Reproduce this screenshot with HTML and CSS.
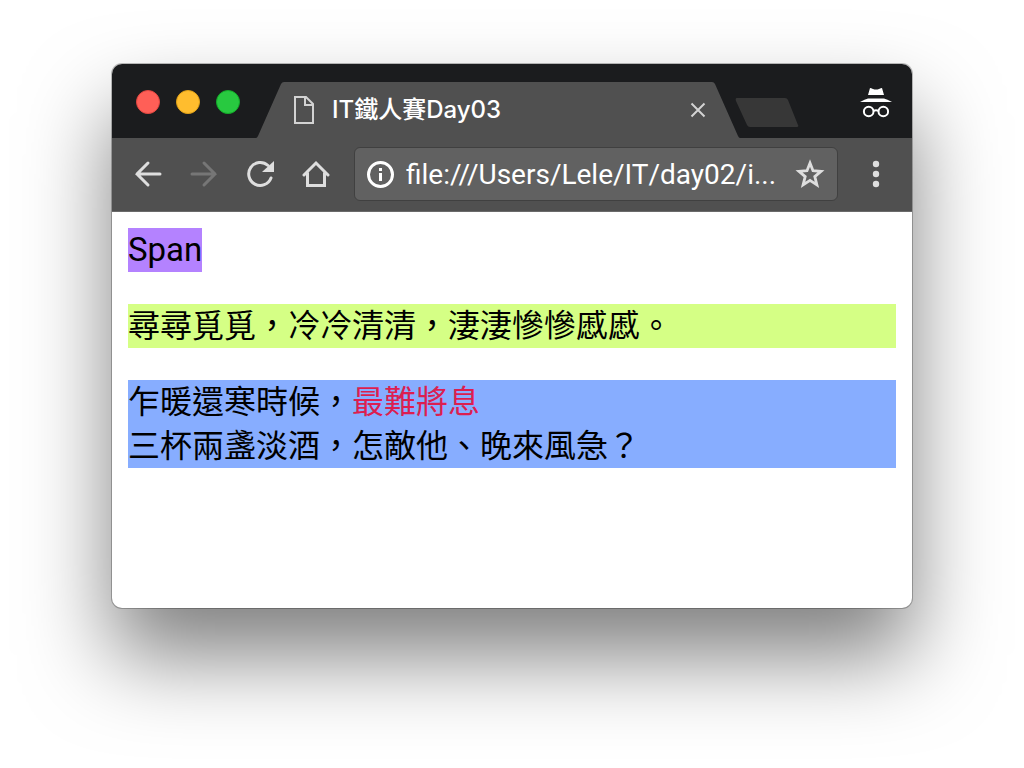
FILE: index.html
```html
<!DOCTYPE html>
<html lang="zh-Hant">
<head>
    <meta charset="UTF-8">
    <meta name="viewport" content="width=device-width, initial-scale=1.0">
    <title>IT鐵人賽Day03</title>
    <link rel="stylesheet" href="styles.css">
</head>
<body>
    <div class="window">
        <header class="tab-strip">
            <div class="lights">
                <button class="light close" aria-label="Close window"></button>
                <button class="light minimize" aria-label="Minimize window"></button>
                <button class="light maximize" aria-label="Zoom window"></button>
            </div>
            <div class="tab">
                <svg class="slope" width="28" height="56" viewBox="0 0 28 56"><path d="M0 56 Q1 56 2 54 L25 2 Q26 0 28 0 V56 Z"/></svg>
                <div class="tab-body">
                    <svg width="20" height="28" viewBox="0 0 20 28" fill="none" stroke="#d3d3d3" stroke-width="2"><path d="M1 1 H12 L19 8 V27 H1 Z M11 1 V9 H19"/></svg>
                    <span class="tab-title">IT鐵人賽Day03</span>
                    <button class="tab-close" aria-label="Close tab">
                        <svg width="16" height="16" viewBox="0 0 16 16" stroke="#d3d3d3" stroke-width="2"><path d="M1.500 1.500 L14.500 14.500 M14.500 1.500 L1.500 14.500"/></svg>
                    </button>
                </div>
                <svg class="slope" width="28" height="56" viewBox="0 0 28 56"><path d="M0 0 Q2 0 3 2 L26 54 Q27 56 28 56 H0 Z"/></svg>
            </div>
            <button class="new-tab" aria-label="New tab">
                <svg width="64" height="30" viewBox="0 0 64 30"><path d="M2 0 H50 Q52 0 53 2 L63 27 Q64 29 62 29 H15 Q13 29 12 27 L1 3 Q0 0 2 0 Z" fill="#373737"/></svg>
            </button>
            <svg class="incognito" width="32" height="32" viewBox="0 0 32 32" fill="#fff">
                <path d="M10 0 Q11 0 13 1 Q16 2 19 1 Q21 0 22 0 L24 7 H8 Z"/>
                <path d="M0 14 Q5 11 8 10.500 H24 Q27 11 32 14 Z"/>
                <g fill="none" stroke="#fff" stroke-width="2"><circle cx="8.700" cy="23.500" r="4.800"/><circle cx="23.300" cy="23.500" r="4.800"/><path d="M13.500 23 Q16 21.500 18.500 23"/></g>
            </svg>
        </header>

        <nav class="toolbar">
            <button class="icon" aria-label="Back">
                <svg width="28" height="28" viewBox="0 0 28 28"><path d="M26 14 H3 M14 3 L3 14 L14 25"/></svg>
            </button>
            <button class="icon disabled" aria-label="Forward" disabled>
                <svg width="28" height="28" viewBox="0 0 28 28"><path d="M2 14 H25 M14 3 L25 14 L14 25"/></svg>
            </button>
            <button class="icon" aria-label="Reload">
                <svg width="28" height="28" viewBox="0 0 28 28"><path d="M22 5.500 A11.500 11.500 0 1 0 25 18"/><path class="solid" d="M28 1 V12 H16 Z"/></svg>
            </button>
            <button class="icon" aria-label="Home">
                <svg width="28" height="28" viewBox="0 0 28 28"><path d="M2 15 L14 3 L26 15 M5.500 13 V25.500 H22.500 V13"/></svg>
            </button>
            <div class="address">
                <svg width="28" height="28" viewBox="0 0 28 28" fill="none" stroke="#fff" stroke-width="3"><circle cx="14.500" cy="14.500" r="12"/><path d="M14.500 13 V21 M14.500 8 V11"/></svg>
                <input type="text" class="url" aria-label="Address" value="file:///Users/Lele/IT/day02/i...">
                <button class="star" aria-label="Bookmark this page">
                    <svg width="30" height="30" viewBox="0 0 30 30" fill="none" stroke="#dedede" stroke-width="2.800"><path d="M15 4 L18 11.700 L26 12.300 L19.800 17.600 L21.900 25.800 L15 21.300 L8.100 25.800 L10.200 17.600 L4 12.300 L12 11.700 Z"/></svg>
                </button>
            </div>
            <button class="icon" aria-label="Menu">
                <svg width="28" height="28" viewBox="0 0 28 28"><g class="solid"><circle cx="14" cy="4" r="3.200"/><circle cx="14" cy="14" r="3.200"/><circle cx="14" cy="24" r="3.200"/></g></svg>
            </button>
        </nav>

        <main class="page">
            <span class="label">Span</span>
            <p class="green">尋尋覓覓，冷冷清清，淒淒慘慘慼慼。</p>
            <p class="blue">乍暖還寒時候，<span class="red">最難將息</span><br>三杯兩盞淡酒，怎敵他、晚來風急？</p>
        </main>
    </div>
</body>
</html>
```
FILE: styles.css
```css
* {
    box-sizing: border-box;
}

body {
    margin: 0;
    padding: 64px 112px 160px;
    background-color: #fff;
    font-family: Roboto, "Noto Sans CJK TC", sans-serif;
}

button {
    display: flex;
    align-items: center;
    justify-content: center;
    padding: 0;
    border: none;
    background: none;
}

svg {
    display: block;
    flex: none;
}

.window {
    display: flex;
    flex-direction: column;
    min-height: calc(100vh - 224px);
    border-radius: 10px;
    overflow: hidden;
    background-color: #fff;
    box-shadow: 0 0 0 1px rgba(0, 0, 0, 0.25), 0 48px 86px rgba(0, 0, 0, 0.5);
}

/* tabs */
.tab-strip {
    display: flex;
    height: 74px;
    padding: 0 20px 0 24px;
    background-color: #1b1c1e;
}

.lights {
    display: flex;
    align-items: center;
    gap: 16px;
    margin-right: 16px;
    padding-top: 2px;
}

.light {
    width: 24px;
    height: 24px;
    border: 1px solid;
    border-radius: 50%;
}

.close {
    background-color: #ff5f57;
    border-color: #e2463f;
}

.minimize {
    background-color: #ffbd2e;
    border-color: #e1a116;
}

.maximize {
    background-color: #28c940;
    border-color: #12ac28;
}

.tab {
    display: flex;
    flex: 0 1 484px;
    min-width: 0;
    align-self: flex-end;
}

.slope {
    fill: #505050;
}

.tab-body {
    display: flex;
    align-items: center;
    flex: 1;
    gap: 18px;
    min-width: 0;
    padding: 0 6px 0 10px;
    background-color: #505050;
}

.tab-title {
    flex: 1;
    overflow: hidden;
    white-space: nowrap;
    color: #fff;
    font-family: Inter, "Noto Sans CJK TC", sans-serif;
    font-size: 24px;
    font-weight: 500;
    line-height: 32px;
}

.new-tab {
    align-self: center;
    margin: 24px 0 0 -5px;
}

.incognito {
    margin: 24px 0 0 auto;
}

/* toolbar */
.toolbar {
    display: flex;
    align-items: center;
    gap: 20px;
    height: 74px;
    padding: 0 18px 2px;
    background-color: #505050;
    border-bottom: 1px solid #6a6a6a;
}

.icon {
    width: 36px;
    height: 36px;
    color: #dedede;
}

.icon svg {
    fill: none;
    stroke: currentColor;
    stroke-width: 3;
    stroke-linecap: round;
}

.icon .solid {
    fill: currentColor;
    stroke: none;
}

.disabled {
    color: #767676;
}

.address {
    display: flex;
    align-items: center;
    flex: 1;
    gap: 12px;
    min-width: 0;
    height: 54px;
    padding: 0 12px 0 11px;
    background-color: #616161;
    border: 1px solid #404040;
    border-radius: 6px;
}

.url {
    flex: 1;
    min-width: 0;
    padding: 2px 0 0;
    border: none;
    outline: none;
    background: none;
    color: #fff;
    font-family: Roboto, sans-serif;
    font-size: 28px;
}

/* page */
.page {
    flex: 1;
    padding: 16px;
    color: #000;
    font-size: 32px;
    line-height: 44px;
}

.page p {
    margin: 32px 0 0;
}

.label {
    display: block;
    width: fit-content;
    background-color: #b482ff;
    font-size: 33px;
}

.green {
    background-color: #d5ff85;
}

.blue {
    background-color: #87adff;
}

.red {
    color: #dc1e50;
}
```
